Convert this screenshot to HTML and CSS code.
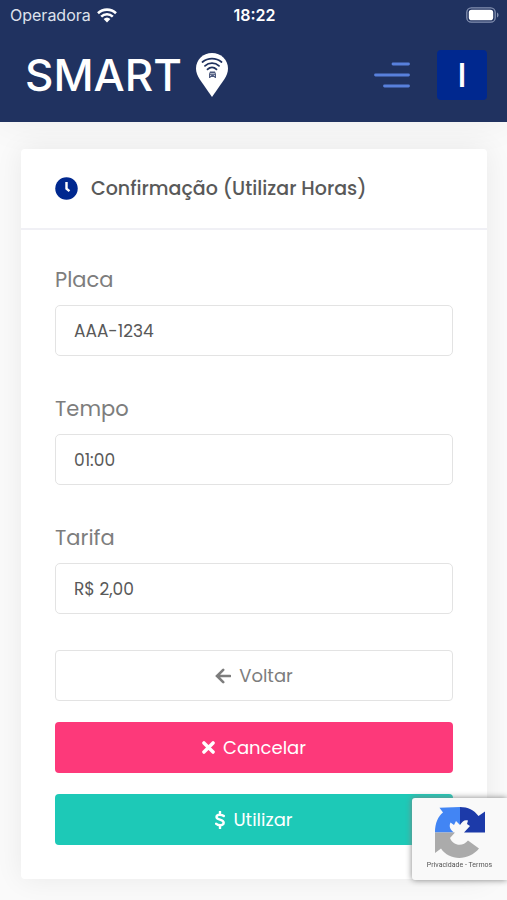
FILE: index.html
```html
<!DOCTYPE html>
<html lang="pt-BR">
<head>
  <meta charset="UTF-8" />
  <meta name="viewport" content="width=device-width, initial-scale=1.0"/>
  <title>Smart - Confirmação</title>
  <link rel="stylesheet" href="styles.css">
</head>
<body>
  <header class="topbar">
    <div class="status">
      <div class="carrier">
        <span>Operadora</span>
        <svg class="wifi" viewBox="0 0 20 15">
          <path d="M1 5.2a13 13 0 0 1 18 0M4.2 8.6a8.4 8.4 0 0 1 11.6 0" fill="none" stroke="#fff" stroke-width="2.6"/>
          <path d="M6.6 11a5 5 0 0 1 6.8 0L10 14.6z" fill="#fff"/>
        </svg>
      </div>
      <span class="clock">18:22</span>
      <div class="power">
        <svg class="battery" viewBox="0 0 33 16">
          <rect x=".8" y=".8" width="28.4" height="14.4" rx="4.5" fill="none" stroke="#8390b0" stroke-width="1.3"/>
          <rect x="2.8" y="2.8" width="24.4" height="10.4" rx="2.8" fill="#fff"/>
          <path d="M31 5.5c2 .8 2 4.200 0 5z" fill="#8390b0"/>
        </svg>
      </div>
    </div>

    <div class="navbar">
      <a href="#" class="brand">
        <span>SMART</span>
        <svg class="pin" viewBox="0 0 32 44">
          <path d="M16 0C7 0 0 6.800 0 15.500c0 4 1.500 7 3.500 10.500L16 44l12.500-18C30.500 22.500 32 19.500 32 15.500 32 6.800 25 0 16 0z" fill="#fff"/>
          <g fill="none" stroke="#203260" stroke-width="1.800" stroke-linecap="round">
            <path d="M6.500 9c5.400-4.600 13.600-4.600 19 0"/>
            <path d="M9 12.800c4-3.600 10-3.600 14 0"/>
            <path d="M11.500 16.300c2.600-2.400 6.400-2.400 9 0"/>
          </g>
          <path d="M14 18.500h5l1 2.500v4h-1.500v-1h-4v1H13v-4z" fill="#4d5a7e"/>
          <path d="M14.200 20.700h4.600M14 22.500h1.200M17.800 22.500H19" stroke="#fff" stroke-width=".7"/>
        </svg>
      </a>
      <div class="tools">
        <button class="menu-btn" aria-label="Menu">
          <svg viewBox="0 0 36 26">
            <path d="M19 2h15.500M1.500 13h33M10.500 24h24" stroke="#5880dc" stroke-width="2.800" stroke-linecap="round"/>
          </svg>
        </button>
        <button class="avatar">I</button>
      </div>
    </div>
  </header>

  <main class="content">
    <section class="card">
      <div class="card-head">
        <svg class="clock-icon" viewBox="0 0 512 512">
          <circle cx="256" cy="256" r="250" fill="#00288f"/>
          <path d="M256 112v150l66 52" fill="none" stroke="#fff" stroke-width="54"/>
        </svg>
        <h1>Confirmação (Utilizar Horas)</h1>
      </div>

      <form class="card-body">
        <div class="form-group">
          <label for="placa">Placa</label>
          <input type="text" id="placa" value="AAA-1234" readonly>
        </div>
        <div class="form-group">
          <label for="tempo">Tempo</label>
          <input type="text" id="tempo" value="01:00" readonly>
        </div>
        <div class="form-group">
          <label for="tarifa">Tarifa</label>
          <input type="text" id="tarifa" value="R$ 2,00" readonly>
        </div>

        <div class="actions">
          <button type="button" class="btn btn-back">
            <svg class="icon-arrow" viewBox="0 0 16 16">
              <path d="M8.200 1.800L2 8l6.200 6.200M2.500 8H15" fill="none" stroke="currentColor" stroke-width="2.600" stroke-linecap="round"/>
            </svg>
            Voltar
          </button>
          <button type="button" class="btn btn-cancel">
            <svg class="icon-times" viewBox="0 0 12 12">
              <path d="M1.800 1.800l8.400 8.400M10.200 1.800l-8.400 8.400" stroke="currentColor" stroke-width="3.200" stroke-linecap="round"/>
            </svg>
            Cancelar
          </button>
          <button type="button" class="btn btn-use">
            <svg class="icon-dollar" viewBox="0 0 10 18">
              <path d="M8.800 5C7.600 4 6.300 3.700 4.800 3.700c-2 0-3.300.9-3.300 2.400C1.500 9.300 8.700 8 8.700 11.700c0 1.700-1.500 2.600-3.500 2.600-1.700 0-3-.5-4.200-1.600M5 .8v3M5 14.200v3" fill="none" stroke="currentColor" stroke-width="2.400" stroke-linecap="round"/>
            </svg>
            Utilizar
          </button>
        </div>
      </form>
    </section>
  </main>

  <!-- reCAPTCHA badge -->
  <div class="captcha">
    <svg class="captcha-logo" viewBox="0 0 50 51">
      <path d="M25 0v18l-4-4-2 4-3.500-2.500c-1.500 3-1 7 3.500 10H0C0 16 3 9.500 8 5.500L4.500.8z" fill="#4285f4"/>
      <path d="M25 0c8 0 14 3 18.500 9L50 4.500v21H29l6-6.500-3-2 1-3.500c-3-1-5.500 0-8 4.500z" fill="#1c3aa9"/>
      <path d="M0 25.500h20l-5 5.500c3 8 13 9 18 2.500l11 8C34 54 14 54 6 41.500L0 46z" fill="#ababab"/>
    </svg>
    <p><a href="#">Privacidade</a> - <a href="#">Termos</a></p>
  </div>
</body>
</html>
```
FILE: styles.css
```css
* {
  box-sizing: border-box;
}

body {
  margin: 0;
  background: #fafafa;
  font-family: Poppins, Inter, sans-serif;
  color: #595959;
  min-height: 100vh;
}

.topbar {
  background: #203260;
  color: #fff;
  height: 122px;
  box-shadow: 0 0 40px rgba(0, 0, 0, 0.06);
}

.status {
  display: grid;
  grid-template-columns: 1fr auto 1fr;
  align-items: center;
  height: 30px;
  padding: 0 8px 0 10px;
  font-family: Inter, sans-serif;
  font-size: 16px;
}

.carrier {
  display: flex;
  align-items: center;
  gap: 6px;
  color: #dde1ec;
}

.wifi {
  width: 20px;
  height: 15px;
}

.clock {
  font-weight: 600;
}

.power {
  display: flex;
  justify-content: flex-end;
}

.battery {
  width: 33px;
  height: 16px;
}

.navbar {
  display: flex;
  justify-content: space-between;
  align-items: center;
  height: 90px;
  padding: 0 20px 0 25px;
}

.brand {
  display: flex;
  align-items: center;
  gap: 14px;
  color: #fff;
  font-family: Inter, sans-serif;
  font-size: 44px;
  font-weight: 500;
  line-height: 46px;
  text-decoration: none;
}

.pin {
  width: 32px;
  height: 44px;
}

.tools {
  display: flex;
  align-items: center;
  gap: 27px;
}

.menu-btn {
  display: flex;
  padding: 0;
  border: none;
  background: none;
}

.menu-btn svg {
  width: 36px;
  height: 26px;
}

.avatar {
  width: 50px;
  height: 50px;
  padding: 0;
  border: none;
  border-radius: 4px;
  background: #00288f;
  color: #fff;
  font-family: inherit;
  font-size: 34px;
  font-weight: 500;
}

.content {
  padding: 27px 20px 21px 21px;
}

.card {
  background: #fff;
  border-radius: 4px;
  box-shadow: 0 0 28px rgba(0, 0, 0, 0.07);
}

.card-head {
  display: flex;
  align-items: center;
  gap: 13px;
  height: 81px;
  padding: 0 34px;
  border-bottom: 2px solid #f0f0f5;
}

.clock-icon {
  width: 23px;
  height: 23px;
}

.card-head h1 {
  margin: 0;
  font-size: 19px;
  font-weight: 500;
}

.card-body {
  padding: 33px 34px 34px;
}

.form-group {
  margin-bottom: 36px;
}

.form-group label {
  display: block;
  margin-bottom: 8px;
  font-size: 21px;
  line-height: 34px;
  color: #7d7d7d;
}

.form-group input {
  display: block;
  width: 100%;
  height: 51px;
  padding: 0 18px;
  border: 1px solid #e3e3e3;
  border-radius: 5px;
  background: #fff;
  color: #595959;
  font-family: inherit;
  font-size: 17px;
}

.actions {
  display: flex;
  flex-direction: column;
  gap: 21px;
}

.btn {
  display: flex;
  justify-content: center;
  align-items: center;
  gap: 8px;
  height: 51px;
  border: 1px solid transparent;
  border-radius: 4px;
  color: #fff;
  font-family: inherit;
  font-size: 18px;
}

.btn-back {
  background: #fff;
  border-color: #e3e3e3;
  color: #7d7d7d;
}

.btn-cancel {
  background: #fd397a;
}

.btn-use {
  background: #1dc9b7;
}

.icon-arrow {
  width: 16px;
  height: 16px;
}

.icon-times {
  width: 13px;
  height: 13px;
}

.icon-dollar {
  width: 10px;
  height: 18px;
}

.captcha {
  position: fixed;
  right: 0;
  bottom: 20px;
  display: flex;
  flex-direction: column;
  align-items: center;
  width: 95px;
  height: 82px;
  padding-top: 9px;
  border-radius: 3px 0 0 3px;
  background: #f9f9f9;
  box-shadow: 0 0 6px #808080;
}

.captcha-logo {
  width: 50px;
  height: 51px;
}

.captcha p {
  margin: 3px 0 0;
  font-family: Roboto, sans-serif;
  font-size: 7px;
  line-height: 8px;
  color: #555;
}

.captcha a {
  color: inherit;
  text-decoration: none;
}
```
